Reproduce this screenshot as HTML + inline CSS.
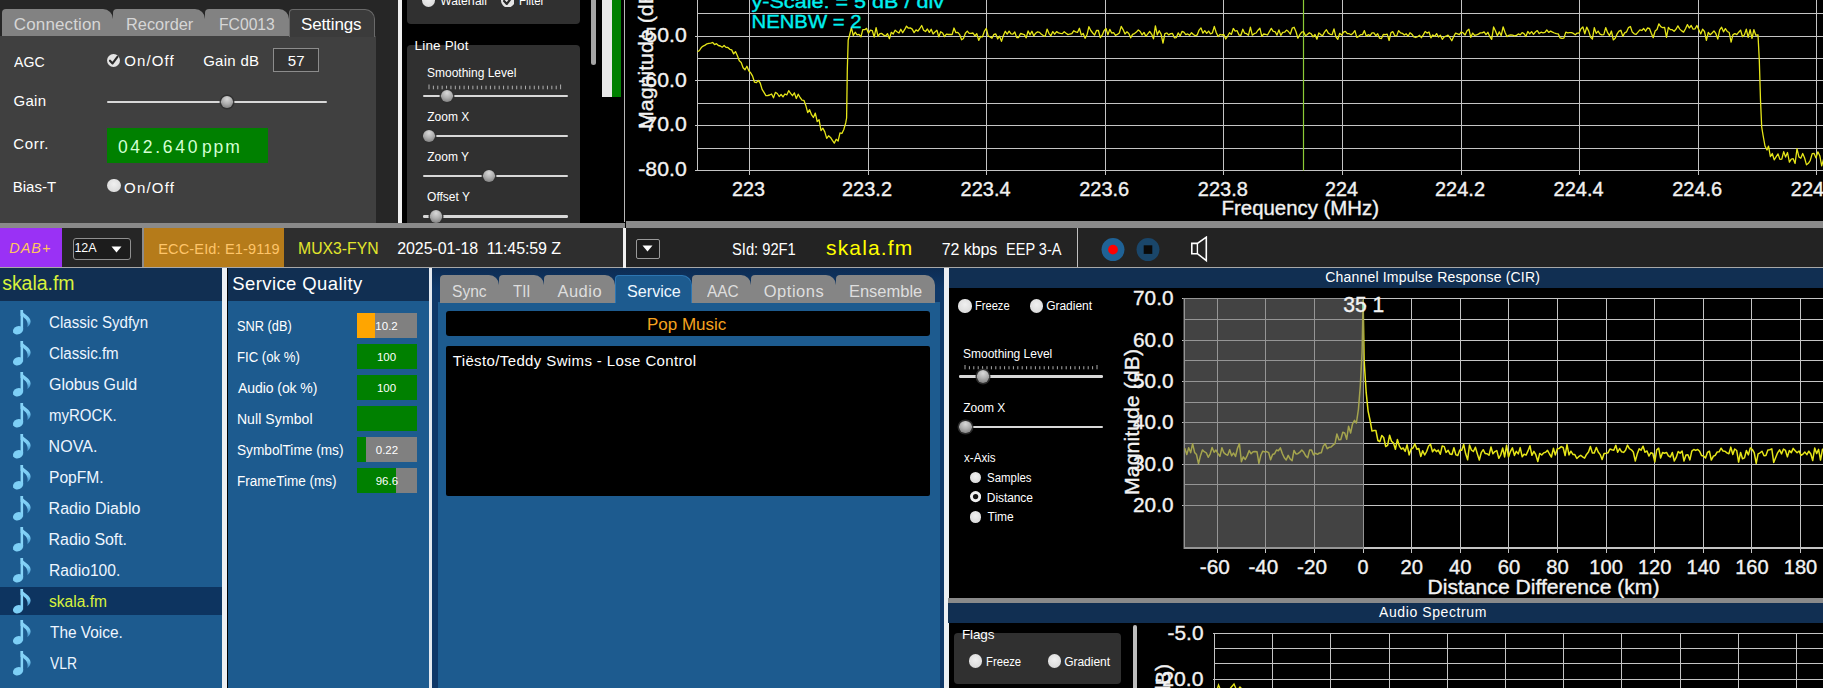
<!DOCTYPE html>
<html lang="en"><head><meta charset="utf-8"><title>DAB receiver</title>
<style>
html,body{margin:0;padding:0;background:#000;}
body{width:1823px;height:688px;overflow:hidden;position:relative;font-family:"Liberation Sans",sans-serif;}
#root{position:absolute;left:0;top:0;width:1823px;height:688px;overflow:hidden;background:#000;}
#root div,#root span,#root svg{position:absolute;display:block;}
#root span{white-space:pre;line-height:1em;}
svg text{font-family:"Liberation Sans",sans-serif;}
</style></head><body><div id="root">
<div style="left:0px;top:0px;width:398px;height:223px;background:#262626;"></div>
<div style="left:0px;top:36px;width:376px;height:187px;background:#404040;"></div>
<div style="left:2px;top:9px;width:111px;height:27px;background:#828282;border-radius:4px 10px 0 0;"></div>
<div style="left:113px;top:9px;width:92px;height:27px;background:#828282;border-radius:4px 10px 0 0;"></div>
<div style="left:205px;top:9px;width:84px;height:27px;background:#828282;border-radius:4px 10px 0 0;"></div>
<div style="left:289px;top:9px;width:86px;height:28px;background:#3b3b3b;border-radius:4px 10px 0 0;box-sizing:border-box;border:1px solid #6a6a6a;border-bottom:none;"></div>
<span style="left:13.85px;top:16.01px;font-size:17px;color:#d6d6d6;letter-spacing:0.126px;">Connection</span>
<span style="left:125.99px;top:16.01px;font-size:17px;color:#d6d6d6;transform:scaleX(0.9626);transform-origin:0 0;">Recorder</span>
<span style="left:218.84px;top:16.01px;font-size:17px;color:#d6d6d6;transform:scaleX(0.9230);transform-origin:0 0;">FC0013</span>
<span style="left:300.94px;top:16.01px;font-size:17px;color:#fff;letter-spacing:-0.114px;">Settings</span>
<span style="left:14.20px;top:53.80px;font-size:15px;color:#fff;transform:scaleX(0.9421);transform-origin:0 0;">AGC</span>
<span style="left:124.33px;top:53.30px;font-size:15px;color:#fff;letter-spacing:1.105px;">On/Off</span>
<span style="left:203.15px;top:52.80px;font-size:15px;color:#fff;letter-spacing:0.292px;">Gain dB</span>
<div style="left:273px;top:48px;width:46px;height:24px;background:#343434;box-sizing:border-box;border:1px solid #8c8c8c;"></div>
<span style="left:287.80px;top:52.80px;font-size:15px;color:#fff;letter-spacing:0.000px;">57</span>
<span style="left:13.45px;top:92.90px;font-size:15px;color:#fff;letter-spacing:0.325px;">Gain</span>
<span style="left:13.25px;top:136.00px;font-size:15px;color:#fff;letter-spacing:0.681px;">Corr.</span>
<div style="left:107px;top:128px;width:161px;height:35px;background:#008000;"></div>
<span style="left:117.90px;top:138.69px;font-size:17.5px;color:#d4ffd4;letter-spacing:2.708px;">042.640</span>
<span style="left:202.06px;top:138.69px;font-size:17.5px;color:#d4ffd4;letter-spacing:1.819px;">ppm</span>
<span style="left:12.80px;top:178.90px;font-size:15px;color:#fff;letter-spacing:-0.010px;">Bias-T</span>
<span style="left:124.03px;top:179.60px;font-size:15px;color:#fff;letter-spacing:1.205px;">On/Off</span>
<svg style="left:107.4px;top:53.5px;" width="13.0" height="13.0" viewBox="0 0 14 14"><circle cx="7" cy="7" r="7" fill="#e4e4e4"/><path d="M3.2 7.2 L6 10.2 L11.2 3.2" fill="none" stroke="#2a2a2a" stroke-width="2.3" stroke-linecap="round" stroke-linejoin="round"/></svg>
<div style="left:107.3px;top:178.8px;width:13.4px;height:13.4px;border-radius:50%;background:radial-gradient(circle at 50% 40%,#f0f0f0,#d4d4d4);"></div>
<div style="left:107px;top:101.1px;width:220px;height:2.4px;background:#d8d8d8;border-radius:1.2px;"></div>
<div style="left:221.0px;top:96.1px;width:12.4px;height:12.4px;border-radius:50%;background:radial-gradient(circle at 50% 25%,#d8d8d8 0%,#b0b0b0 45%,#707070 100%);box-shadow:0 0 0 1.5px rgba(48,48,48,.9);"></div>
<div style="left:398px;top:0px;width:4px;height:223px;background:#f0f0f0;"></div>
<div style="left:402px;top:0px;width:222px;height:223px;background:#000;"></div>
<div style="left:406.5px;top:-10px;width:173px;height:34px;background:#303030;border-radius:4px;"></div>
<div style="left:421.9px;top:-6.3px;width:13.4px;height:13.4px;border-radius:50%;background:radial-gradient(circle at 50% 40%,#f0f0f0,#d4d4d4);"></div>
<span style="left:440.34px;top:-4.86px;font-size:12px;color:#fff;letter-spacing:-0.040px;">Waterfall</span>
<svg style="left:500.9px;top:-6.4px;" width="13.6" height="13.6" viewBox="0 0 14 14"><circle cx="7" cy="7" r="7" fill="#e4e4e4"/><path d="M3.2 7.2 L6 10.2 L11.2 3.2" fill="none" stroke="#2a2a2a" stroke-width="2.3" stroke-linecap="round" stroke-linejoin="round"/></svg>
<span style="left:518.69px;top:-4.86px;font-size:12px;color:#fff;transform:scaleX(0.9529);transform-origin:0 0;">Filter</span>
<div style="left:406.5px;top:44.5px;width:173px;height:200px;background:#303030;border-radius:4px;"></div>
<span style="left:414.62px;top:38.87px;font-size:13.5px;color:#fff;letter-spacing:0.154px;">Line Plot</span>
<span style="left:427.06px;top:66.64px;font-size:12px;color:#fff;letter-spacing:-0.009px;">Smoothing Level</span>
<svg style="left:0;top:0" width="1823" height="688"><line x1="429.00" y1="84.5" x2="429.00" y2="89.3" stroke="#bdbdbd" stroke-width="0.9"/><line x1="433.39" y1="85.7" x2="433.39" y2="89.3" stroke="#bdbdbd" stroke-width="0.9"/><line x1="437.77" y1="85.7" x2="437.77" y2="89.3" stroke="#bdbdbd" stroke-width="0.9"/><line x1="442.16" y1="85.7" x2="442.16" y2="89.3" stroke="#bdbdbd" stroke-width="0.9"/><line x1="446.55" y1="85.7" x2="446.55" y2="89.3" stroke="#bdbdbd" stroke-width="0.9"/><line x1="450.93" y1="85.7" x2="450.93" y2="89.3" stroke="#bdbdbd" stroke-width="0.9"/><line x1="455.32" y1="85.7" x2="455.32" y2="89.3" stroke="#bdbdbd" stroke-width="0.9"/><line x1="459.71" y1="85.7" x2="459.71" y2="89.3" stroke="#bdbdbd" stroke-width="0.9"/><line x1="464.09" y1="85.7" x2="464.09" y2="89.3" stroke="#bdbdbd" stroke-width="0.9"/><line x1="468.48" y1="85.7" x2="468.48" y2="89.3" stroke="#bdbdbd" stroke-width="0.9"/><line x1="472.87" y1="85.7" x2="472.87" y2="89.3" stroke="#bdbdbd" stroke-width="0.9"/><line x1="477.25" y1="85.7" x2="477.25" y2="89.3" stroke="#bdbdbd" stroke-width="0.9"/><line x1="481.64" y1="85.7" x2="481.64" y2="89.3" stroke="#bdbdbd" stroke-width="0.9"/><line x1="486.03" y1="85.7" x2="486.03" y2="89.3" stroke="#bdbdbd" stroke-width="0.9"/><line x1="490.41" y1="85.7" x2="490.41" y2="89.3" stroke="#bdbdbd" stroke-width="0.9"/><line x1="494.80" y1="85.7" x2="494.80" y2="89.3" stroke="#bdbdbd" stroke-width="0.9"/><line x1="499.19" y1="85.7" x2="499.19" y2="89.3" stroke="#bdbdbd" stroke-width="0.9"/><line x1="503.57" y1="85.7" x2="503.57" y2="89.3" stroke="#bdbdbd" stroke-width="0.9"/><line x1="507.96" y1="85.7" x2="507.96" y2="89.3" stroke="#bdbdbd" stroke-width="0.9"/><line x1="512.35" y1="85.7" x2="512.35" y2="89.3" stroke="#bdbdbd" stroke-width="0.9"/><line x1="516.73" y1="85.7" x2="516.73" y2="89.3" stroke="#bdbdbd" stroke-width="0.9"/><line x1="521.12" y1="85.7" x2="521.12" y2="89.3" stroke="#bdbdbd" stroke-width="0.9"/><line x1="525.51" y1="85.7" x2="525.51" y2="89.3" stroke="#bdbdbd" stroke-width="0.9"/><line x1="529.89" y1="85.7" x2="529.89" y2="89.3" stroke="#bdbdbd" stroke-width="0.9"/><line x1="534.28" y1="85.7" x2="534.28" y2="89.3" stroke="#bdbdbd" stroke-width="0.9"/><line x1="538.67" y1="85.7" x2="538.67" y2="89.3" stroke="#bdbdbd" stroke-width="0.9"/><line x1="543.05" y1="85.7" x2="543.05" y2="89.3" stroke="#bdbdbd" stroke-width="0.9"/><line x1="547.44" y1="85.7" x2="547.44" y2="89.3" stroke="#bdbdbd" stroke-width="0.9"/><line x1="551.83" y1="85.7" x2="551.83" y2="89.3" stroke="#bdbdbd" stroke-width="0.9"/><line x1="556.21" y1="85.7" x2="556.21" y2="89.3" stroke="#bdbdbd" stroke-width="0.9"/><line x1="560.60" y1="84.5" x2="560.60" y2="89.3" stroke="#bdbdbd" stroke-width="0.9"/></svg>
<div style="left:422.5px;top:94.89999999999999px;width:145.5px;height:2.4px;background:#d8d8d8;border-radius:1.2px;"></div>
<div style="left:440.6px;top:89.9px;width:12.4px;height:12.4px;border-radius:50%;background:radial-gradient(circle at 50% 25%,#d8d8d8 0%,#b0b0b0 45%,#707070 100%);box-shadow:0 0 0 1.5px rgba(48,48,48,.9);"></div>
<span style="left:427.24px;top:111.04px;font-size:12px;color:#fff;">Zoom X</span>
<div style="left:422.5px;top:134.9px;width:145.0px;height:2.4px;background:#d8d8d8;border-radius:1.2px;"></div>
<div style="left:423.1px;top:129.9px;width:12.4px;height:12.4px;border-radius:50%;background:radial-gradient(circle at 50% 25%,#d8d8d8 0%,#b0b0b0 45%,#707070 100%);box-shadow:0 0 0 1.5px rgba(48,48,48,.9);"></div>
<span style="left:427.24px;top:151.44px;font-size:12px;color:#fff;">Zoom Y</span>
<div style="left:422.5px;top:174.8px;width:145.5px;height:2.4px;background:#d8d8d8;border-radius:1.2px;"></div>
<div style="left:482.8px;top:169.8px;width:12.4px;height:12.4px;border-radius:50%;background:radial-gradient(circle at 50% 25%,#d8d8d8 0%,#b0b0b0 45%,#707070 100%);box-shadow:0 0 0 1.5px rgba(48,48,48,.9);"></div>
<span style="left:427.06px;top:191.34px;font-size:12px;color:#fff;">Offset Y</span>
<div style="left:422.5px;top:215.20000000000002px;width:145.5px;height:2.4px;background:#d8d8d8;border-radius:1.2px;"></div>
<div style="left:429.8px;top:210.2px;width:12.4px;height:12.4px;border-radius:50%;background:radial-gradient(circle at 50% 25%,#d8d8d8 0%,#b0b0b0 45%,#707070 100%);box-shadow:0 0 0 1.5px rgba(48,48,48,.9);"></div>
<div style="left:591px;top:-5px;width:5px;height:70px;background:#a4a4a4;border-radius:2.5px;"></div>
<div style="left:601.5px;top:0px;width:10.2px;height:96.6px;background:#e8e8e8;"></div>
<div style="left:611.7px;top:0px;width:9.8px;height:96.6px;background:#008000;"></div>
<div style="left:624px;top:0px;width:1.4px;height:222px;background:#b8b8b8;"></div>
<svg style="left:0;top:0" width="1823" height="688" viewBox="0 0 1823 688"><rect x="625.5" y="0" width="1198" height="221" fill="#000"/><path d="M697 170.5H1823M697 148.1H1823M697 125.7H1823M697 103.3H1823M697 80.9H1823M697 58.5H1823M697 36.1H1823M697 13.7H1823M749.4 0V175.0M868.0 0V175.0M986.6 0V175.0M1105.2 0V175.0M1223.8 0V175.0M1342.4 0V175.0M1461.0 0V175.0M1579.6 0V175.0M1698.2 0V175.0M1816.8 0V175.0M697 0V170.5" stroke="#c4c4c4" stroke-width="1" fill="none" shape-rendering="crispEdges"/><path d="M695 170.5H697M695 125.7H697M695 80.9H697M695 36.1H697" stroke="#c4c4c4" stroke-width="1" fill="none" shape-rendering="crispEdges"/><path d="M1303.5 0V170.5" stroke="#8ccb35" stroke-width="1.2" fill="none"/><path d="M697.5 51.8 L699.4 50.5 L701.3 47.6 L703.2 46.1 L705.1 45.1 L707.0 43.8 L708.9 43.4 L710.8 43.2 L712.7 42.5 L714.6 44.6 L716.5 43.7 L718.4 45.5 L720.3 46.0 L722.2 47.2 L724.1 45.5 L726.0 47.4 L727.9 47.5 L729.8 49.3 L731.7 49.9 L733.6 53.9 L735.5 51.6 L737.4 55.8 L739.3 60.8 L741.2 62.5 L743.1 67.8 L745.0 69.7 L746.9 66.2 L748.8 70.8 L750.7 72.9 L752.6 76.1 L754.5 82.2 L756.4 82.7 L758.3 80.5 L760.2 83.0 L762.1 89.4 L764.0 92.4 L765.9 95.6 L767.8 95.5 L769.7 95.0 L771.6 94.0 L773.5 97.8 L775.4 92.4 L777.3 93.5 L779.2 96.5 L781.1 94.5 L783.0 96.9 L784.9 94.0 L786.8 94.9 L788.7 90.7 L790.6 93.3 L792.5 95.7 L794.4 92.9 L796.3 98.5 L798.2 94.2 L800.1 97.5 L802.0 100.1 L803.9 100.3 L805.8 105.4 L807.7 112.6 L809.6 109.7 L811.5 114.7 L813.4 117.5 L815.3 113.1 L817.2 121.5 L819.1 119.8 L821.0 130.5 L822.9 128.2 L824.8 131.9 L826.7 138.4 L828.6 135.8 L830.5 137.4 L832.4 140.4 L834.3 143.1 L836.2 139.3 L838.1 141.0 L840.0 132.9 L841.9 133.5 L843.8 129.5 L845.7 122.9 L846.6 118.0 L847.3 70.0 L848.2 40.0 L849.5 35.5 L851.4 27.7 L853.3 35.5 L855.2 32.2 L857.1 34.8 L859.0 34.4 L860.9 36.9 L862.8 29.6 L864.7 29.7 L866.6 28.4 L868.5 33.2 L870.4 30.2 L872.3 30.7 L874.2 37.0 L876.1 27.7 L878.0 36.4 L879.9 33.6 L881.8 33.5 L883.7 35.2 L885.6 36.0 L887.5 33.6 L889.4 38.7 L891.3 32.3 L893.2 34.0 L895.1 30.2 L897.0 31.7 L898.9 33.1 L900.8 29.3 L902.7 32.7 L904.6 29.7 L906.5 26.1 L908.4 28.2 L910.3 27.9 L912.2 29.1 L914.1 32.6 L916.0 29.9 L917.9 31.1 L919.8 28.5 L921.7 25.5 L923.6 30.2 L925.5 31.5 L927.4 29.0 L929.3 32.4 L931.2 29.3 L933.1 34.0 L935.0 31.9 L936.9 30.3 L938.8 36.9 L940.7 31.7 L942.6 33.0 L944.5 36.6 L946.4 34.2 L948.3 34.5 L950.2 34.4 L952.1 34.6 L954.0 28.0 L955.9 32.7 L957.8 32.3 L959.7 34.7 L961.6 39.8 L963.5 38.4 L965.4 33.2 L967.3 31.1 L969.2 33.3 L971.1 33.4 L973.0 33.0 L974.9 35.8 L976.8 33.8 L978.7 40.4 L980.6 36.5 L982.5 36.8 L984.4 31.1 L986.3 28.4 L988.2 36.2 L990.1 36.9 L992.0 38.2 L993.9 34.3 L995.8 34.0 L997.7 39.0 L999.6 36.2 L1001.5 41.4 L1003.4 35.4 L1005.3 31.3 L1007.2 34.1 L1009.1 31.2 L1011.0 33.9 L1012.9 34.2 L1014.8 32.0 L1016.7 37.6 L1018.6 37.5 L1020.5 33.5 L1022.4 34.0 L1024.3 34.6 L1026.2 37.8 L1028.1 31.0 L1030.0 34.8 L1031.9 31.3 L1033.8 35.9 L1035.7 33.2 L1037.6 31.8 L1039.5 32.4 L1041.4 34.2 L1043.3 35.5 L1045.2 36.4 L1047.1 29.1 L1049.0 33.6 L1050.9 35.7 L1052.8 31.6 L1054.7 34.2 L1056.6 31.6 L1058.5 32.9 L1060.4 33.4 L1062.3 33.6 L1064.2 31.8 L1066.1 33.3 L1068.0 34.6 L1069.9 34.0 L1071.8 33.6 L1073.7 30.8 L1075.6 31.9 L1077.5 32.4 L1079.4 28.3 L1081.3 35.0 L1083.2 33.4 L1085.1 38.3 L1087.0 34.8 L1088.9 26.7 L1090.8 30.5 L1092.7 33.0 L1094.6 35.1 L1096.5 30.4 L1098.4 30.5 L1100.3 37.6 L1102.2 35.2 L1104.1 30.6 L1106.0 28.5 L1107.9 34.8 L1109.8 29.4 L1111.7 33.0 L1113.6 32.7 L1115.5 35.3 L1117.4 34.4 L1119.3 33.0 L1121.2 26.4 L1123.1 29.6 L1125.0 34.0 L1126.9 31.8 L1128.8 33.4 L1130.7 37.8 L1132.6 34.4 L1134.5 33.6 L1136.4 32.1 L1138.3 29.9 L1140.2 31.5 L1142.1 34.9 L1144.0 32.4 L1145.9 36.4 L1147.8 33.8 L1149.7 31.5 L1151.6 34.1 L1153.5 38.8 L1155.4 25.8 L1157.3 34.8 L1159.2 30.7 L1161.1 34.1 L1163.0 43.1 L1164.9 33.6 L1166.8 33.0 L1168.7 34.9 L1170.6 33.6 L1172.5 33.4 L1174.4 37.8 L1176.3 37.6 L1178.2 32.9 L1180.1 35.9 L1182.0 31.4 L1183.9 32.2 L1185.8 34.6 L1187.7 33.9 L1189.6 35.3 L1191.5 32.7 L1193.4 34.4 L1195.3 35.8 L1197.2 34.9 L1199.1 30.1 L1201.0 27.9 L1202.9 33.2 L1204.8 30.7 L1206.7 33.3 L1208.6 31.1 L1210.5 33.9 L1212.4 33.0 L1214.3 26.4 L1216.2 32.5 L1218.1 36.6 L1220.0 34.4 L1221.9 35.0 L1223.8 34.5 L1225.7 39.0 L1227.6 36.3 L1229.5 32.8 L1231.4 34.4 L1233.3 28.5 L1235.2 31.1 L1237.1 30.7 L1239.0 35.0 L1240.9 35.3 L1242.8 29.2 L1244.7 33.2 L1246.6 33.7 L1248.5 35.2 L1250.4 27.1 L1252.3 35.2 L1254.2 33.7 L1256.1 33.0 L1258.0 30.2 L1259.9 28.2 L1261.8 36.4 L1263.7 34.0 L1265.6 34.3 L1267.5 35.0 L1269.4 31.6 L1271.3 28.4 L1273.2 31.3 L1275.1 31.7 L1277.0 35.1 L1278.9 29.9 L1280.8 35.4 L1282.7 32.4 L1284.6 32.2 L1286.5 30.1 L1288.4 31.5 L1290.3 34.2 L1292.2 28.2 L1294.1 27.3 L1296.0 31.7 L1297.9 38.2 L1299.8 34.7 L1301.7 32.2 L1303.6 31.7 L1305.5 35.8 L1307.4 34.4 L1309.3 32.7 L1311.2 33.8 L1313.1 36.8 L1315.0 34.4 L1316.9 39.2 L1318.8 32.9 L1320.7 34.6 L1322.6 35.8 L1324.5 32.1 L1326.4 29.7 L1328.3 33.1 L1330.2 34.3 L1332.1 34.7 L1334.0 28.9 L1335.9 36.8 L1337.8 39.4 L1339.7 33.3 L1341.6 35.1 L1343.5 32.2 L1345.4 31.3 L1347.3 33.6 L1349.2 33.7 L1351.1 34.8 L1353.0 33.2 L1354.9 30.6 L1356.8 37.4 L1358.7 36.4 L1360.6 34.6 L1362.5 34.6 L1364.4 30.6 L1366.3 36.3 L1368.2 34.7 L1370.1 35.6 L1372.0 32.9 L1373.9 32.8 L1375.8 35.7 L1377.7 33.7 L1379.6 38.2 L1381.5 38.5 L1383.4 34.3 L1385.3 34.7 L1387.2 34.1 L1389.1 40.5 L1391.0 32.7 L1392.9 31.7 L1394.8 35.8 L1396.7 35.9 L1398.6 30.6 L1400.5 32.9 L1402.4 33.3 L1404.3 35.0 L1406.2 33.8 L1408.1 36.2 L1410.0 32.7 L1411.9 34.2 L1413.8 36.8 L1415.7 37.5 L1417.6 36.7 L1419.5 35.3 L1421.4 37.7 L1423.3 34.9 L1425.2 31.5 L1427.1 33.1 L1429.0 32.0 L1430.9 37.9 L1432.8 34.9 L1434.7 36.3 L1436.6 33.6 L1438.5 37.0 L1440.4 35.2 L1442.3 39.3 L1444.2 36.9 L1446.1 36.2 L1448.0 35.1 L1449.9 37.5 L1451.8 40.8 L1453.7 36.5 L1455.6 33.1 L1457.5 33.8 L1459.4 34.6 L1461.3 32.0 L1463.2 33.0 L1465.1 35.0 L1467.0 30.8 L1468.9 29.2 L1470.8 37.3 L1472.7 33.1 L1474.6 35.4 L1476.5 34.8 L1478.4 34.1 L1480.3 32.9 L1482.2 32.8 L1484.1 31.8 L1486.0 34.7 L1487.9 32.3 L1489.8 36.7 L1491.7 39.3 L1493.6 26.9 L1495.5 31.0 L1497.4 35.8 L1499.3 31.9 L1501.2 35.7 L1503.1 26.8 L1505.0 32.3 L1506.9 36.6 L1508.8 35.4 L1510.7 34.8 L1512.6 35.2 L1514.5 35.8 L1516.4 35.4 L1518.3 33.9 L1520.2 34.8 L1522.1 32.6 L1524.0 33.6 L1525.9 36.5 L1527.8 31.5 L1529.7 33.9 L1531.6 31.7 L1533.5 34.3 L1535.4 32.0 L1537.3 30.6 L1539.2 33.6 L1541.1 32.2 L1543.0 32.8 L1544.9 32.4 L1546.8 30.0 L1548.7 32.4 L1550.6 31.1 L1552.5 32.1 L1554.4 33.0 L1556.3 33.7 L1558.2 33.9 L1560.1 37.9 L1562.0 38.3 L1563.9 38.1 L1565.8 32.1 L1567.7 32.8 L1569.6 32.7 L1571.5 32.6 L1573.4 33.4 L1575.3 34.8 L1577.2 33.1 L1579.1 33.0 L1581.0 28.8 L1582.9 27.0 L1584.8 33.8 L1586.7 27.1 L1588.6 30.9 L1590.5 37.0 L1592.4 39.1 L1594.3 27.7 L1596.2 33.4 L1598.1 31.1 L1600.0 34.1 L1601.9 34.9 L1603.8 34.7 L1605.7 27.6 L1607.6 32.7 L1609.5 35.7 L1611.4 31.0 L1613.3 39.9 L1615.2 38.3 L1617.1 33.9 L1619.0 31.2 L1620.9 30.3 L1622.8 36.4 L1624.7 32.8 L1626.6 31.8 L1628.5 27.6 L1630.4 26.5 L1632.3 32.1 L1634.2 33.8 L1636.1 34.3 L1638.0 32.1 L1639.9 29.8 L1641.8 30.5 L1643.7 28.5 L1645.6 31.2 L1647.5 28.0 L1649.4 28.3 L1651.3 33.2 L1653.2 37.7 L1655.1 31.1 L1657.0 29.5 L1658.9 23.8 L1660.8 26.6 L1662.7 27.7 L1664.6 27.4 L1666.5 37.4 L1668.4 27.3 L1670.3 29.6 L1672.2 29.7 L1674.1 31.3 L1676.0 29.3 L1677.9 25.9 L1679.8 29.1 L1681.7 30.9 L1683.6 32.1 L1685.5 28.7 L1687.4 24.6 L1689.3 28.0 L1691.2 25.5 L1693.1 29.2 L1695.0 28.9 L1696.9 25.5 L1698.8 29.7 L1700.7 33.9 L1702.6 29.2 L1704.5 31.5 L1706.4 40.4 L1708.3 32.5 L1710.2 34.8 L1712.1 33.0 L1714.0 30.9 L1715.9 33.7 L1717.8 39.1 L1719.7 29.8 L1721.6 27.2 L1723.5 31.8 L1725.4 28.6 L1727.3 31.5 L1729.2 32.5 L1731.1 42.2 L1733.0 34.7 L1734.9 33.7 L1736.8 34.6 L1738.7 32.2 L1740.6 30.1 L1742.5 36.7 L1744.4 34.9 L1746.3 29.1 L1748.2 37.4 L1750.1 29.7 L1752.0 38.4 L1753.9 29.6 L1755.8 35.2 L1758.0 35.0 L1759.3 60.0 L1760.5 100.0 L1761.7 127.0 L1763.0 135.0 L1765.0 146.0 L1767.0 150.0 L1768.5 146.1 L1770.4 156.6 L1772.3 153.5 L1774.2 159.9 L1776.1 156.9 L1778.0 153.9 L1779.9 159.4 L1781.8 159.1 L1783.7 151.6 L1785.6 157.1 L1787.5 152.5 L1789.4 162.2 L1791.3 159.1 L1793.2 158.7 L1795.1 163.5 L1797.0 148.6 L1798.9 156.9 L1800.8 158.2 L1802.7 153.5 L1804.6 158.0 L1806.5 164.8 L1808.4 163.3 L1810.3 160.3 L1812.2 153.6 L1814.1 153.5 L1816.0 157.9 L1817.9 151.8 L1819.8 155.7 L1821.7 165.9 L1823.6 158.9 L1825.5 154.4" stroke="#e6e619" stroke-width="1.3" fill="none" stroke-linejoin="round"/><text x="686.7" y="176.2" font-size="20.5" fill="#f2f2f2" stroke="#f2f2f2" stroke-width="0.35" text-anchor="end" textLength="48.4" lengthAdjust="spacingAndGlyphs">-80.0</text><text x="686.7" y="131.4" font-size="20.5" fill="#f2f2f2" stroke="#f2f2f2" stroke-width="0.35" text-anchor="end" textLength="48.4" lengthAdjust="spacingAndGlyphs">-70.0</text><text x="686.7" y="86.6" font-size="20.5" fill="#f2f2f2" stroke="#f2f2f2" stroke-width="0.35" text-anchor="end" textLength="48.4" lengthAdjust="spacingAndGlyphs">-60.0</text><text x="686.7" y="41.8" font-size="20.5" fill="#f2f2f2" stroke="#f2f2f2" stroke-width="0.35" text-anchor="end" textLength="48.4" lengthAdjust="spacingAndGlyphs">-50.0</text><text x="748.4" y="195.8" font-size="20.5" fill="#f2f2f2" stroke="#f2f2f2" stroke-width="0.35" text-anchor="middle" textLength="33.0" lengthAdjust="spacingAndGlyphs">223</text><text x="867.0" y="195.8" font-size="20.5" fill="#f2f2f2" stroke="#f2f2f2" stroke-width="0.35" text-anchor="middle" textLength="50.0" lengthAdjust="spacingAndGlyphs">223.2</text><text x="985.6" y="195.8" font-size="20.5" fill="#f2f2f2" stroke="#f2f2f2" stroke-width="0.35" text-anchor="middle" textLength="50.0" lengthAdjust="spacingAndGlyphs">223.4</text><text x="1104.2" y="195.8" font-size="20.5" fill="#f2f2f2" stroke="#f2f2f2" stroke-width="0.35" text-anchor="middle" textLength="50.0" lengthAdjust="spacingAndGlyphs">223.6</text><text x="1222.8" y="195.8" font-size="20.5" fill="#f2f2f2" stroke="#f2f2f2" stroke-width="0.35" text-anchor="middle" textLength="50.0" lengthAdjust="spacingAndGlyphs">223.8</text><text x="1341.4" y="195.8" font-size="20.5" fill="#f2f2f2" stroke="#f2f2f2" stroke-width="0.35" text-anchor="middle" textLength="33.0" lengthAdjust="spacingAndGlyphs">224</text><text x="1460.0" y="195.8" font-size="20.5" fill="#f2f2f2" stroke="#f2f2f2" stroke-width="0.35" text-anchor="middle" textLength="50.0" lengthAdjust="spacingAndGlyphs">224.2</text><text x="1578.6" y="195.8" font-size="20.5" fill="#f2f2f2" stroke="#f2f2f2" stroke-width="0.35" text-anchor="middle" textLength="50.0" lengthAdjust="spacingAndGlyphs">224.4</text><text x="1697.2" y="195.8" font-size="20.5" fill="#f2f2f2" stroke="#f2f2f2" stroke-width="0.35" text-anchor="middle" textLength="50.0" lengthAdjust="spacingAndGlyphs">224.6</text><text x="1815.8" y="195.8" font-size="20.5" fill="#f2f2f2" stroke="#f2f2f2" stroke-width="0.35" text-anchor="middle" textLength="50.0" lengthAdjust="spacingAndGlyphs">224.8</text><text x="1300.3" y="215.0" font-size="20.5" fill="#f2f2f2" stroke="#f2f2f2" stroke-width="0.35" text-anchor="middle" textLength="157.5" lengthAdjust="spacingAndGlyphs">Frequency (MHz)</text><text x="0.0" y="0.0" font-size="21" fill="#f2f2f2" stroke="#f2f2f2" stroke-width="0.35" text-anchor="middle" textLength="146.0" lengthAdjust="spacingAndGlyphs" transform="translate(653,56) rotate(-90)">Magnitude (dB)</text><text x="751.5" y="8.3" font-size="19" fill="#00f0f0" stroke="#00f0f0" stroke-width="0.35" text-anchor="start" textLength="192.5" lengthAdjust="spacingAndGlyphs">y-Scale: = 5 dB / div</text><text x="751.5" y="28.1" font-size="19" fill="#00f0f0" stroke="#00f0f0" stroke-width="0.35" text-anchor="start" textLength="110.0" lengthAdjust="spacingAndGlyphs">NENBW = 2</text></svg>
<div style="left:0px;top:223px;width:625px;height:5px;background:#8a8a8a;"></div>
<div style="left:625.5px;top:220.5px;width:1198px;height:7.5px;background:#8a8a8a;"></div>
<div style="left:0px;top:228px;width:1823px;height:38.5px;background:#262626;"></div>
<div style="left:0px;top:266.5px;width:1823px;height:1.7px;background:#a8a8a8;"></div>
<div style="left:0px;top:228px;width:62.3px;height:38.5px;background:#9a31f5;"></div>
<span style="left:9.26px;top:240.73px;font-size:14.5px;color:#ffc65e;letter-spacing:0.987px;font-style:italic;">DAB+</span>
<div style="left:142px;top:228px;width:2px;height:38.5px;background:#8c8c8c;"></div>
<div style="left:144px;top:228px;width:139.5px;height:38.5px;background:#b57b1a;"></div>
<div style="left:283.5px;top:228px;width:339px;height:38.5px;background:#2e2e2e;"></div>
<div style="left:72.8px;top:238px;width:58.5px;height:21.7px;background:#1c1c1c;box-sizing:border-box;border:1px solid #909090;border-radius:3px;"></div>
<span style="left:74.56px;top:242.42px;font-size:12.5px;color:#fff;letter-spacing:-0.125px;">12A</span>
<svg style="left:111px;top:245.5px" width="11" height="7" viewBox="0 0 11 7"><path d="M0.5 0.6H10.5L5.5 6.4Z" fill="#fff"/></svg>
<span style="left:158.24px;top:241.63px;font-size:14.5px;color:#ffc569;letter-spacing:0.163px;">ECC-EId: E1-9119</span>
<span style="left:298.44px;top:240.86px;font-size:16px;color:#e2e62c;transform:scaleX(0.9848);transform-origin:0 0;">MUX3-FYN</span>
<span style="left:397.30px;top:240.86px;font-size:16px;color:#fff;letter-spacing:-0.115px;">2025-01-18  11:45:59 Z</span>
<div style="left:625.7px;top:228px;width:1198px;height:38.5px;background:#232323;"></div>
<div style="left:622.7px;top:227.5px;width:3px;height:40px;background:#f0f0f0;"></div>
<div style="left:635.5px;top:238.6px;width:24.7px;height:20.8px;background:#1c1c1c;box-sizing:border-box;border:1px solid #9a9a9a;border-radius:2px;"></div>
<svg style="left:642.3px;top:245.3px" width="11" height="7" viewBox="0 0 11 7"><path d="M0.5 0.6H10.5L5.5 6.4Z" fill="#fff"/></svg>
<span style="left:732.04px;top:241.86px;font-size:16px;color:#fff;transform:scaleX(0.9187);transform-origin:0 0;">SId: 92F1</span>
<span style="left:826.07px;top:236.62px;font-size:21px;color:#ffff00;letter-spacing:1.153px;">skala.fm</span>
<span style="left:941.70px;top:241.86px;font-size:16px;color:#fff;letter-spacing:-0.070px;">72 kbps</span>
<span style="left:1006.44px;top:241.86px;font-size:16px;color:#fff;transform:scaleX(0.9086);transform-origin:0 0;">EEP 3-A</span>
<div style="left:1076.6px;top:228px;width:1.2px;height:39px;background:#c0c0c0;"></div>
<svg style="left:1100px;top:236px" width="120" height="28" viewBox="0 0 120 28"><circle cx="13" cy="13.6" r="11.5" fill="#1f6296"/><circle cx="13" cy="13.6" r="4.9" fill="#ff0000"/><circle cx="48" cy="13.6" r="11.5" fill="#1a466a"/><rect x="43.7" y="9.3" width="8.6" height="8.6" fill="#0a0a0a"/><path d="M91.8 7.4H97.4L106.3 1.2V24.6L97.4 17.7H91.8Z" fill="none" stroke="#fff" stroke-width="1.6" stroke-linejoin="miter"/><path d="M97.4 7.4V17.7" stroke="#fff" stroke-width="1.4"/></svg>
<div style="left:0px;top:268px;width:222px;height:420px;background:#1d5b8f;"></div>
<div style="left:0px;top:268px;width:222.3px;height:32.6px;background:#112f52;"></div>
<span style="left:2.21px;top:274.49px;font-size:19.5px;color:#d9f23c;letter-spacing:-0.041px;">skala.fm</span>
<svg style="left:10px;top:309px" width="22" height="27" viewBox="0 0 22 27"><defs><linearGradient id="ng" x1="0" y1="0" x2="0" y2="1"><stop offset="0" stop-color="#8fd8fa"/><stop offset="0.55" stop-color="#7accf4"/><stop offset="1" stop-color="#3f8dc6"/></linearGradient></defs><path d="M11 0.9 C13.6 5.4 20.7 7.2 20.6 12.6 C20.5 15 19.2 17 17.3 18.2 C18.3 14.6 17.4 10.8 13.1 7.9 V7 H10.6 V1 Z" fill="url(#ng)"/><rect x="10.6" y="1" width="2.5" height="20.5" fill="#86d4f8"/><ellipse cx="8" cy="21.2" rx="5.2" ry="4" transform="rotate(-22 8 21.2)" fill="#7dcff6"/></svg>
<span style="left:49.14px;top:315.46px;font-size:16px;color:#eef6ff;transform:scaleX(0.9443);transform-origin:0 0;">Classic Sydfyn</span>
<svg style="left:10px;top:340px" width="22" height="27" viewBox="0 0 22 27"><path d="M11 0.9 C13.6 5.4 20.7 7.2 20.6 12.6 C20.5 15 19.2 17 17.3 18.2 C18.3 14.6 17.4 10.8 13.1 7.9 V7 H10.6 V1 Z" fill="url(#ng)"/><rect x="10.6" y="1" width="2.5" height="20.5" fill="#86d4f8"/><ellipse cx="8" cy="21.2" rx="5.2" ry="4" transform="rotate(-22 8 21.2)" fill="#7dcff6"/></svg>
<span style="left:49.14px;top:346.46px;font-size:16px;color:#eef6ff;transform:scaleX(0.9444);transform-origin:0 0;">Classic.fm</span>
<svg style="left:10px;top:371px" width="22" height="27" viewBox="0 0 22 27"><path d="M11 0.9 C13.6 5.4 20.7 7.2 20.6 12.6 C20.5 15 19.2 17 17.3 18.2 C18.3 14.6 17.4 10.8 13.1 7.9 V7 H10.6 V1 Z" fill="url(#ng)"/><rect x="10.6" y="1" width="2.5" height="20.5" fill="#86d4f8"/><ellipse cx="8" cy="21.2" rx="5.2" ry="4" transform="rotate(-22 8 21.2)" fill="#7dcff6"/></svg>
<span style="left:49.10px;top:377.46px;font-size:16px;color:#eef6ff;letter-spacing:-0.092px;">Globus Guld</span>
<svg style="left:10px;top:402px" width="22" height="27" viewBox="0 0 22 27"><path d="M11 0.9 C13.6 5.4 20.7 7.2 20.6 12.6 C20.5 15 19.2 17 17.3 18.2 C18.3 14.6 17.4 10.8 13.1 7.9 V7 H10.6 V1 Z" fill="url(#ng)"/><rect x="10.6" y="1" width="2.5" height="20.5" fill="#86d4f8"/><ellipse cx="8" cy="21.2" rx="5.2" ry="4" transform="rotate(-22 8 21.2)" fill="#7dcff6"/></svg>
<span style="left:48.92px;top:408.46px;font-size:16px;color:#eef6ff;transform:scaleX(0.9389);transform-origin:0 0;">myROCK.</span>
<svg style="left:10px;top:433px" width="22" height="27" viewBox="0 0 22 27"><path d="M11 0.9 C13.6 5.4 20.7 7.2 20.6 12.6 C20.5 15 19.2 17 17.3 18.2 C18.3 14.6 17.4 10.8 13.1 7.9 V7 H10.6 V1 Z" fill="url(#ng)"/><rect x="10.6" y="1" width="2.5" height="20.5" fill="#86d4f8"/><ellipse cx="8" cy="21.2" rx="5.2" ry="4" transform="rotate(-22 8 21.2)" fill="#7dcff6"/></svg>
<span style="left:48.62px;top:439.46px;font-size:16px;color:#eef6ff;letter-spacing:0.065px;">NOVA.</span>
<svg style="left:10px;top:464px" width="22" height="27" viewBox="0 0 22 27"><path d="M11 0.9 C13.6 5.4 20.7 7.2 20.6 12.6 C20.5 15 19.2 17 17.3 18.2 C18.3 14.6 17.4 10.8 13.1 7.9 V7 H10.6 V1 Z" fill="url(#ng)"/><rect x="10.6" y="1" width="2.5" height="20.5" fill="#86d4f8"/><ellipse cx="8" cy="21.2" rx="5.2" ry="4" transform="rotate(-22 8 21.2)" fill="#7dcff6"/></svg>
<span style="left:48.65px;top:470.46px;font-size:16px;color:#eef6ff;transform:scaleX(0.9760);transform-origin:0 0;">PopFM.</span>
<svg style="left:10px;top:495px" width="22" height="27" viewBox="0 0 22 27"><path d="M11 0.9 C13.6 5.4 20.7 7.2 20.6 12.6 C20.5 15 19.2 17 17.3 18.2 C18.3 14.6 17.4 10.8 13.1 7.9 V7 H10.6 V1 Z" fill="url(#ng)"/><rect x="10.6" y="1" width="2.5" height="20.5" fill="#86d4f8"/><ellipse cx="8" cy="21.2" rx="5.2" ry="4" transform="rotate(-22 8 21.2)" fill="#7dcff6"/></svg>
<span style="left:48.62px;top:501.46px;font-size:16px;color:#eef6ff;letter-spacing:0.011px;">Radio Diablo</span>
<svg style="left:10px;top:526px" width="22" height="27" viewBox="0 0 22 27"><path d="M11 0.9 C13.6 5.4 20.7 7.2 20.6 12.6 C20.5 15 19.2 17 17.3 18.2 C18.3 14.6 17.4 10.8 13.1 7.9 V7 H10.6 V1 Z" fill="url(#ng)"/><rect x="10.6" y="1" width="2.5" height="20.5" fill="#86d4f8"/><ellipse cx="8" cy="21.2" rx="5.2" ry="4" transform="rotate(-22 8 21.2)" fill="#7dcff6"/></svg>
<span style="left:48.62px;top:532.46px;font-size:16px;color:#eef6ff;letter-spacing:-0.080px;">Radio Soft.</span>
<svg style="left:10px;top:557px" width="22" height="27" viewBox="0 0 22 27"><path d="M11 0.9 C13.6 5.4 20.7 7.2 20.6 12.6 C20.5 15 19.2 17 17.3 18.2 C18.3 14.6 17.4 10.8 13.1 7.9 V7 H10.6 V1 Z" fill="url(#ng)"/><rect x="10.6" y="1" width="2.5" height="20.5" fill="#86d4f8"/><ellipse cx="8" cy="21.2" rx="5.2" ry="4" transform="rotate(-22 8 21.2)" fill="#7dcff6"/></svg>
<span style="left:48.65px;top:563.46px;font-size:16px;color:#eef6ff;transform:scaleX(0.9778);transform-origin:0 0;">Radio100.</span>
<div style="left:0px;top:587.2px;width:222.3px;height:27.4px;background:#0d3460;"></div>
<svg style="left:10px;top:588px" width="22" height="27" viewBox="0 0 22 27"><path d="M11 0.9 C13.6 5.4 20.7 7.2 20.6 12.6 C20.5 15 19.2 17 17.3 18.2 C18.3 14.6 17.4 10.8 13.1 7.9 V7 H10.6 V1 Z" fill="url(#ng)"/><rect x="10.6" y="1" width="2.5" height="20.5" fill="#86d4f8"/><ellipse cx="8" cy="21.2" rx="5.2" ry="4" transform="rotate(-22 8 21.2)" fill="#7dcff6"/></svg>
<span style="left:49.43px;top:594.46px;font-size:16px;color:#d9f23c;transform:scaleX(0.9728);transform-origin:0 0;">skala.fm</span>
<svg style="left:10px;top:619px" width="22" height="27" viewBox="0 0 22 27"><path d="M11 0.9 C13.6 5.4 20.7 7.2 20.6 12.6 C20.5 15 19.2 17 17.3 18.2 C18.3 14.6 17.4 10.8 13.1 7.9 V7 H10.6 V1 Z" fill="url(#ng)"/><rect x="10.6" y="1" width="2.5" height="20.5" fill="#86d4f8"/><ellipse cx="8" cy="21.2" rx="5.2" ry="4" transform="rotate(-22 8 21.2)" fill="#7dcff6"/></svg>
<span style="left:49.59px;top:625.46px;font-size:16px;color:#eef6ff;transform:scaleX(0.9626);transform-origin:0 0;">The Voice.</span>
<svg style="left:10px;top:650px" width="22" height="27" viewBox="0 0 22 27"><path d="M11 0.9 C13.6 5.4 20.7 7.2 20.6 12.6 C20.5 15 19.2 17 17.3 18.2 C18.3 14.6 17.4 10.8 13.1 7.9 V7 H10.6 V1 Z" fill="url(#ng)"/><rect x="10.6" y="1" width="2.5" height="20.5" fill="#86d4f8"/><ellipse cx="8" cy="21.2" rx="5.2" ry="4" transform="rotate(-22 8 21.2)" fill="#7dcff6"/></svg>
<span style="left:49.83px;top:656.46px;font-size:16px;color:#eef6ff;transform:scaleX(0.8674);transform-origin:0 0;">VLR</span>
<div style="left:222.3px;top:267.5px;width:5.2px;height:421px;background:#eceff3;"></div>
<div style="left:227.5px;top:268px;width:201.1px;height:420px;background:#1d5b8f;"></div>
<div style="left:227.5px;top:268px;width:201.1px;height:32.6px;background:#112f52;"></div>
<span style="left:232.27px;top:274.94px;font-size:18.5px;color:#fff;letter-spacing:0.394px;">Service Quality</span>
<span style="left:237.42px;top:319.05px;font-size:14px;color:#fff;transform:scaleX(0.9130);transform-origin:0 0;">SNR (dB)</span>
<div style="left:357.3px;top:313px;width:60.2px;height:24.6px;background:#808080;"></div>
<div style="left:357.3px;top:313px;width:18px;height:24.6px;background:#ffa500;"></div>
<span style="left:375.35px;top:321.27px;font-size:11.5px;color:#fff;">10.2</span>
<span style="left:236.95px;top:350.05px;font-size:14px;color:#fff;transform:scaleX(0.9401);transform-origin:0 0;">FIC (ok %)</span>
<div style="left:357.3px;top:344px;width:60.2px;height:24.6px;background:#808080;"></div>
<div style="left:357.3px;top:344px;width:60.2px;height:24.6px;background:#008000;"></div>
<span style="left:376.94px;top:352.27px;font-size:11.5px;color:#fff;">100</span>
<span style="left:238.00px;top:381.05px;font-size:14px;color:#fff;letter-spacing:-0.067px;">Audio (ok %)</span>
<div style="left:357.3px;top:375px;width:60.2px;height:24.6px;background:#808080;"></div>
<div style="left:357.3px;top:375px;width:60.2px;height:24.6px;background:#008000;"></div>
<span style="left:376.94px;top:383.27px;font-size:11.5px;color:#fff;">100</span>
<span style="left:236.88px;top:412.05px;font-size:14px;color:#fff;letter-spacing:0.094px;">Null Symbol</span>
<div style="left:357.3px;top:406px;width:60.2px;height:24.6px;background:#808080;"></div>
<div style="left:357.3px;top:406px;width:60.2px;height:24.6px;background:#008000;"></div>
<span style="left:237.39px;top:443.05px;font-size:14px;color:#fff;transform:scaleX(0.9753);transform-origin:0 0;">SymbolTime (ms)</span>
<div style="left:357.3px;top:437px;width:60.2px;height:24.6px;background:#808080;"></div>
<div style="left:357.3px;top:437px;width:9px;height:24.6px;background:#008000;"></div>
<span style="left:375.75px;top:445.27px;font-size:11.5px;color:#fff;">0.22</span>
<span style="left:236.92px;top:474.05px;font-size:14px;color:#fff;transform:scaleX(0.9679);transform-origin:0 0;">FrameTime (ms)</span>
<div style="left:357.3px;top:468px;width:60.2px;height:24.6px;background:#808080;"></div>
<div style="left:357.3px;top:468px;width:39px;height:24.6px;background:#008000;"></div>
<span style="left:375.69px;top:476.27px;font-size:11.5px;color:#fff;">96.6</span>
<div style="left:428.6px;top:267.5px;width:3.1px;height:421px;background:#e4e9f0;"></div>
<div style="left:431.7px;top:268px;width:512px;height:420px;background:#0f3868;"></div>
<div style="left:431.7px;top:268px;width:512px;height:34.5px;background:linear-gradient(#0d2c53,#0f3868 60%);"></div>
<div style="left:437.6px;top:302px;width:502px;height:386px;background:#1d5b8f;"></div>
<div style="left:439.5px;top:275px;width:59.5px;height:27.5px;background:#858585;border-radius:4px 10px 0 0;"></div>
<div style="left:499px;top:275px;width:44.60000000000002px;height:27.5px;background:#858585;border-radius:4px 10px 0 0;"></div>
<div style="left:543.6px;top:275px;width:71.10000000000002px;height:27.5px;background:#858585;border-radius:4px 10px 0 0;"></div>
<div style="left:692px;top:275px;width:59px;height:27.5px;background:#858585;border-radius:4px 10px 0 0;"></div>
<div style="left:751px;top:275px;width:85px;height:27.5px;background:#858585;border-radius:4px 10px 0 0;"></div>
<div style="left:836px;top:275px;width:98.70000000000005px;height:27.5px;background:#858585;border-radius:4px 10px 0 0;"></div>
<div style="left:615px;top:275px;width:77.2px;height:28px;background:#1d5b8f;border-radius:4px 10px 0 0;box-sizing:border-box;border:1px solid #2d76b2;border-bottom:none;"></div>
<span style="left:452.10px;top:282.63px;font-size:16.5px;color:#dedede;transform:scaleX(0.9449);transform-origin:0 0;">Sync</span>
<span style="left:513.10px;top:282.63px;font-size:16.5px;color:#dedede;transform:scaleX(0.9077);transform-origin:0 0;">TII</span>
<span style="left:557.40px;top:282.63px;font-size:16.5px;color:#dedede;letter-spacing:0.501px;">Audio</span>
<span style="left:706.60px;top:282.63px;font-size:16.5px;color:#dedede;transform:scaleX(0.9361);transform-origin:0 0;">AAC</span>
<span style="left:763.76px;top:282.63px;font-size:16.5px;color:#dedede;letter-spacing:0.513px;">Options</span>
<span style="left:848.88px;top:282.63px;font-size:16.5px;color:#dedede;letter-spacing:0.003px;">Ensemble</span>
<span style="left:626.87px;top:282.63px;font-size:16.5px;color:#eef7ff;transform:scaleX(0.9787);transform-origin:0 0;">Service</span>
<div style="left:446.4px;top:311.3px;width:483.6px;height:24.4px;background:#000;border-radius:3px;"></div>
<span style="left:646.96px;top:315.61px;font-size:17px;color:#f5a31f;">Pop Music</span>
<div style="left:446.4px;top:345.5px;width:483.6px;height:150.3px;background:#000;border-radius:2px;"></div>
<span style="left:452.70px;top:352.80px;font-size:15px;color:#fff;letter-spacing:0.379px;">Tiësto/Teddy Swims - Lose Control</span>
<div style="left:943.7px;top:267.5px;width:5px;height:421px;background:#eceff3;"></div>
<div style="left:948.7px;top:268px;width:875px;height:19.8px;background:#112f52;"></div>
<span style="left:1325.30px;top:270.45px;font-size:14px;color:#fff;letter-spacing:0.181px;">Channel Impulse Response (CIR)</span>
<div style="left:958.4px;top:299.4px;width:13.2px;height:13.2px;border-radius:50%;background:radial-gradient(circle at 50% 40%,#f0f0f0,#d4d4d4);"></div>
<span style="left:975.11px;top:300.44px;font-size:12px;color:#fff;transform:scaleX(0.9269);transform-origin:0 0;">Freeze</span>
<div style="left:1029.7px;top:299.4px;width:13.2px;height:13.2px;border-radius:50%;background:radial-gradient(circle at 50% 40%,#f0f0f0,#d4d4d4);"></div>
<span style="left:1046.20px;top:300.44px;font-size:12px;color:#fff;letter-spacing:-0.023px;">Gradient</span>
<span style="left:963.06px;top:348.14px;font-size:12px;color:#fff;letter-spacing:-0.016px;">Smoothing Level</span>
<svg style="left:0;top:0" width="1823" height="688"><line x1="965.00" y1="365.0" x2="965.00" y2="369.3" stroke="#bdbdbd" stroke-width="0.9"/><line x1="969.40" y1="366.2" x2="969.40" y2="369.3" stroke="#bdbdbd" stroke-width="0.9"/><line x1="973.80" y1="366.2" x2="973.80" y2="369.3" stroke="#bdbdbd" stroke-width="0.9"/><line x1="978.20" y1="366.2" x2="978.20" y2="369.3" stroke="#bdbdbd" stroke-width="0.9"/><line x1="982.60" y1="366.2" x2="982.60" y2="369.3" stroke="#bdbdbd" stroke-width="0.9"/><line x1="987.00" y1="366.2" x2="987.00" y2="369.3" stroke="#bdbdbd" stroke-width="0.9"/><line x1="991.40" y1="366.2" x2="991.40" y2="369.3" stroke="#bdbdbd" stroke-width="0.9"/><line x1="995.80" y1="366.2" x2="995.80" y2="369.3" stroke="#bdbdbd" stroke-width="0.9"/><line x1="1000.20" y1="366.2" x2="1000.20" y2="369.3" stroke="#bdbdbd" stroke-width="0.9"/><line x1="1004.60" y1="366.2" x2="1004.60" y2="369.3" stroke="#bdbdbd" stroke-width="0.9"/><line x1="1009.00" y1="366.2" x2="1009.00" y2="369.3" stroke="#bdbdbd" stroke-width="0.9"/><line x1="1013.40" y1="366.2" x2="1013.40" y2="369.3" stroke="#bdbdbd" stroke-width="0.9"/><line x1="1017.80" y1="366.2" x2="1017.80" y2="369.3" stroke="#bdbdbd" stroke-width="0.9"/><line x1="1022.20" y1="366.2" x2="1022.20" y2="369.3" stroke="#bdbdbd" stroke-width="0.9"/><line x1="1026.60" y1="366.2" x2="1026.60" y2="369.3" stroke="#bdbdbd" stroke-width="0.9"/><line x1="1031.00" y1="366.2" x2="1031.00" y2="369.3" stroke="#bdbdbd" stroke-width="0.9"/><line x1="1035.40" y1="366.2" x2="1035.40" y2="369.3" stroke="#bdbdbd" stroke-width="0.9"/><line x1="1039.80" y1="366.2" x2="1039.80" y2="369.3" stroke="#bdbdbd" stroke-width="0.9"/><line x1="1044.20" y1="366.2" x2="1044.20" y2="369.3" stroke="#bdbdbd" stroke-width="0.9"/><line x1="1048.60" y1="366.2" x2="1048.60" y2="369.3" stroke="#bdbdbd" stroke-width="0.9"/><line x1="1053.00" y1="366.2" x2="1053.00" y2="369.3" stroke="#bdbdbd" stroke-width="0.9"/><line x1="1057.40" y1="366.2" x2="1057.40" y2="369.3" stroke="#bdbdbd" stroke-width="0.9"/><line x1="1061.80" y1="366.2" x2="1061.80" y2="369.3" stroke="#bdbdbd" stroke-width="0.9"/><line x1="1066.20" y1="366.2" x2="1066.20" y2="369.3" stroke="#bdbdbd" stroke-width="0.9"/><line x1="1070.60" y1="366.2" x2="1070.60" y2="369.3" stroke="#bdbdbd" stroke-width="0.9"/><line x1="1075.00" y1="366.2" x2="1075.00" y2="369.3" stroke="#bdbdbd" stroke-width="0.9"/><line x1="1079.40" y1="366.2" x2="1079.40" y2="369.3" stroke="#bdbdbd" stroke-width="0.9"/><line x1="1083.80" y1="366.2" x2="1083.80" y2="369.3" stroke="#bdbdbd" stroke-width="0.9"/><line x1="1088.20" y1="366.2" x2="1088.20" y2="369.3" stroke="#bdbdbd" stroke-width="0.9"/><line x1="1092.60" y1="366.2" x2="1092.60" y2="369.3" stroke="#bdbdbd" stroke-width="0.9"/><line x1="1097.00" y1="365.0" x2="1097.00" y2="369.3" stroke="#bdbdbd" stroke-width="0.9"/></svg>
<div style="left:959px;top:375.2px;width:144px;height:2.4px;background:#d8d8d8;border-radius:1.2px;"></div>
<div style="left:976.9px;top:370.2px;width:12.4px;height:12.4px;border-radius:50%;background:radial-gradient(circle at 50% 25%,#d8d8d8 0%,#b0b0b0 45%,#707070 100%);box-shadow:0 0 0 1.5px rgba(48,48,48,.9);"></div>
<span style="left:963.24px;top:402.14px;font-size:12px;color:#fff;">Zoom X</span>
<div style="left:959px;top:425.8px;width:144px;height:2.4px;background:#d8d8d8;border-radius:1.2px;"></div>
<div style="left:959.3px;top:420.8px;width:12.4px;height:12.4px;border-radius:50%;background:radial-gradient(circle at 50% 25%,#d8d8d8 0%,#b0b0b0 45%,#707070 100%);box-shadow:0 0 0 1.5px rgba(48,48,48,.9);"></div>
<span style="left:963.68px;top:451.64px;font-size:12px;color:#fff;transform:scaleX(0.9657);transform-origin:0 0;">x-Axis</span>
<div style="left:969.8px;top:471.5px;width:11.2px;height:11.2px;border-radius:50%;background:radial-gradient(circle at 50% 40%,#f0f0f0,#d4d4d4);"></div>
<span style="left:987.29px;top:471.74px;font-size:12px;color:#fff;transform:scaleX(0.9536);transform-origin:0 0;">Samples</span>
<svg style="left:969.8px;top:491.4px;" width="11.2" height="11.2" viewBox="0 0 14 14"><circle cx="7" cy="7" r="7" fill="#f0f0f0"/><circle cx="7" cy="7" r="3.3" fill="#111"/></svg>
<span style="left:986.84px;top:491.64px;font-size:12px;color:#fff;letter-spacing:-0.083px;">Distance</span>
<div style="left:969.8px;top:511.4px;width:11.2px;height:11.2px;border-radius:50%;background:radial-gradient(circle at 50% 40%,#f0f0f0,#d4d4d4);"></div>
<span style="left:987.56px;top:511.24px;font-size:12px;color:#fff;letter-spacing:-0.013px;">Time</span>
<svg style="left:0;top:0" width="1823" height="688" viewBox="0 0 1823 688"><path d="M1184.3 298.6H1823M1184.3 319.3H1823M1184.3 340.0H1823M1184.3 360.7H1823M1184.3 381.4H1823M1184.3 402.1H1823M1184.3 422.8H1823M1184.3 443.5H1823M1184.3 464.2H1823M1184.3 484.9H1823M1184.3 505.6H1823M1184.3 547.0H1823M1184.3 548.4H1823M1217.3 298.6V552.9M1265.9 298.6V552.9M1314.5 298.6V552.9M1363.1 298.6V552.9M1411.7 298.6V552.9M1460.3 298.6V552.9M1508.9 298.6V552.9M1557.5 298.6V552.9M1606.1 298.6V552.9M1654.7 298.6V552.9M1703.3 298.6V552.9M1751.9 298.6V552.9M1800.5 298.6V552.9M1184.3 298.6V548.4" stroke="#c4c4c4" stroke-width="1" fill="none" shape-rendering="crispEdges"/><path d="M1182.3 298.6H1184.3M1182.3 340.0H1184.3M1182.3 381.4H1184.3M1182.3 422.8H1184.3M1182.3 464.2H1184.3M1182.3 505.6H1184.3" stroke="#c4c4c4" stroke-width="1" fill="none" shape-rendering="crispEdges"/><path d="M1184.8 448.2 L1186.8 454.5 L1188.7 447.8 L1190.7 452.7 L1192.6 443.7 L1194.6 452.4 L1196.5 454.6 L1198.5 463.7 L1200.4 455.9 L1202.4 449.9 L1204.3 451.7 L1206.3 452.8 L1208.2 457.3 L1210.2 453.8 L1212.1 447.5 L1214.1 452.3 L1216.0 450.0 L1218.0 453.8 L1219.9 456.3 L1221.9 447.8 L1223.8 452.6 L1225.8 454.4 L1227.7 455.2 L1229.7 449.8 L1231.6 455.7 L1233.6 453.0 L1235.5 456.5 L1237.5 448.3 L1239.4 443.6 L1241.4 461.7 L1243.3 456.9 L1245.3 459.5 L1247.2 455.6 L1249.2 450.6 L1251.1 453.8 L1253.1 451.8 L1255.0 451.5 L1257.0 451.7 L1258.9 463.3 L1260.9 455.0 L1262.8 451.2 L1264.8 451.9 L1266.7 451.6 L1268.7 452.7 L1270.6 459.7 L1272.6 454.5 L1274.5 453.8 L1276.5 450.0 L1278.4 450.8 L1280.4 447.9 L1282.3 453.5 L1284.3 457.8 L1286.2 460.0 L1288.2 455.4 L1290.1 458.9 L1292.1 460.7 L1294.0 450.5 L1296.0 453.9 L1297.9 453.7 L1299.9 452.2 L1301.8 450.1 L1303.8 452.3 L1305.7 455.9 L1307.7 457.7 L1309.6 450.1 L1311.6 450.1 L1313.5 454.9 L1315.5 453.2 L1317.4 454.3 L1319.4 453.0 L1321.3 452.7 L1323.3 446.1 L1325.2 443.7 L1327.2 448.7 L1329.1 447.3 L1331.1 447.0 L1333.0 445.1 L1335.0 443.7 L1336.9 434.0 L1338.9 439.7 L1340.8 439.5 L1342.8 432.3 L1344.7 433.0 L1346.7 439.2 L1348.6 426.2 L1350.6 433.0 L1352.5 424.0 L1354.5 420.4 L1356.4 423.0 L1358.4 409.5 L1360.3 386.1 L1362.1 352.0 L1363.1 300.0 L1364.1 360.0 L1366.2 392.7 L1368.1 411.1 L1370.1 420.5 L1372.0 431.1 L1374.0 430.5 L1375.9 430.5 L1377.9 440.5 L1379.8 441.7 L1381.8 435.5 L1383.7 437.5 L1385.7 446.5 L1387.6 445.4 L1389.6 435.2 L1391.5 441.2 L1393.5 443.1 L1395.4 449.3 L1397.4 439.4 L1399.3 445.9 L1401.3 449.1 L1403.2 448.0 L1405.2 451.4 L1407.1 444.8 L1409.1 454.9 L1411.0 449.2 L1413.0 447.8 L1414.9 443.9 L1416.9 449.2 L1418.8 448.5 L1420.8 456.6 L1422.7 450.7 L1424.7 455.0 L1426.6 451.5 L1428.6 446.0 L1430.5 444.3 L1432.5 451.7 L1434.4 449.2 L1436.4 451.6 L1438.3 450.1 L1440.3 454.3 L1442.2 445.9 L1444.2 446.6 L1446.1 452.4 L1448.1 450.2 L1450.0 454.1 L1452.0 454.4 L1453.9 447.7 L1455.9 454.9 L1457.8 455.5 L1459.8 450.0 L1461.7 450.3 L1463.7 444.5 L1465.6 453.6 L1467.6 459.8 L1469.5 445.0 L1471.5 450.2 L1473.4 451.5 L1475.4 447.3 L1477.3 453.7 L1479.3 460.0 L1481.2 452.7 L1483.2 449.7 L1485.1 453.4 L1487.1 453.7 L1489.0 455.3 L1491.0 447.0 L1492.9 453.7 L1494.9 451.6 L1496.8 450.6 L1498.8 458.3 L1500.7 455.0 L1502.7 448.0 L1504.6 456.9 L1506.6 445.3 L1508.5 456.9 L1510.5 451.3 L1512.4 447.8 L1514.4 455.4 L1516.3 451.4 L1518.3 453.9 L1520.2 447.6 L1522.2 456.8 L1524.1 454.3 L1526.1 455.1 L1528.0 450.9 L1530.0 445.8 L1531.9 455.3 L1533.9 451.3 L1535.8 454.7 L1537.8 461.5 L1539.7 453.4 L1541.7 455.0 L1543.6 452.9 L1545.6 452.2 L1547.5 450.4 L1549.5 454.0 L1551.4 457.0 L1553.4 448.3 L1555.3 454.9 L1557.3 448.7 L1559.2 448.4 L1561.2 446.6 L1563.1 447.5 L1565.1 455.6 L1567.0 444.6 L1569.0 454.9 L1570.9 451.2 L1572.9 454.4 L1574.8 454.6 L1576.8 458.5 L1578.7 456.7 L1580.7 455.3 L1582.6 456.9 L1584.6 458.1 L1586.5 454.4 L1588.5 452.1 L1590.4 446.5 L1592.4 453.1 L1594.3 453.1 L1596.3 447.4 L1598.2 452.0 L1600.2 454.6 L1602.1 459.6 L1604.1 453.6 L1606.0 453.3 L1608.0 452.8 L1609.9 449.0 L1611.9 449.7 L1613.8 450.2 L1615.8 445.3 L1617.7 452.2 L1619.7 448.5 L1621.6 451.8 L1623.6 452.4 L1625.5 450.3 L1627.5 445.1 L1629.4 448.7 L1631.4 449.8 L1633.3 452.0 L1635.3 461.1 L1637.2 454.1 L1639.2 448.8 L1641.1 450.2 L1643.1 446.2 L1645.0 452.2 L1647.0 451.0 L1648.9 456.1 L1650.9 452.7 L1652.8 453.5 L1654.8 461.8 L1656.7 449.8 L1658.7 448.2 L1660.6 458.1 L1662.6 452.5 L1664.5 453.3 L1666.5 452.4 L1668.4 455.9 L1670.4 457.0 L1672.3 452.5 L1674.3 461.0 L1676.2 457.4 L1678.2 451.5 L1680.1 453.1 L1682.1 451.1 L1684.0 461.1 L1686.0 455.0 L1687.9 454.7 L1689.9 459.9 L1691.8 451.1 L1693.8 449.5 L1695.7 450.4 L1697.7 449.5 L1699.6 451.3 L1701.6 455.6 L1703.5 456.1 L1705.5 457.9 L1707.4 452.5 L1709.4 451.2 L1711.3 460.1 L1713.3 456.3 L1715.2 455.4 L1717.2 452.0 L1719.1 451.8 L1721.1 448.2 L1723.0 451.0 L1725.0 451.3 L1726.9 452.9 L1728.9 453.7 L1730.8 447.1 L1732.8 454.5 L1734.7 449.0 L1736.7 450.5 L1738.6 462.1 L1740.6 452.4 L1742.5 458.7 L1744.5 457.9 L1746.4 450.5 L1748.4 454.9 L1750.3 447.9 L1752.3 449.5 L1754.2 452.6 L1756.2 463.4 L1758.1 453.8 L1760.1 452.8 L1762.0 451.2 L1764.0 455.7 L1765.9 455.5 L1767.9 449.9 L1769.8 449.7 L1771.8 448.9 L1773.7 462.5 L1775.7 457.4 L1777.6 452.8 L1779.6 449.8 L1781.5 453.9 L1783.5 449.0 L1785.4 450.3 L1787.4 456.9 L1789.3 450.6 L1791.3 452.6 L1793.2 448.4 L1795.2 450.7 L1797.1 452.7 L1799.1 451.0 L1801.0 455.4 L1803.0 454.1 L1804.9 452.1 L1806.9 454.6 L1808.8 451.2 L1810.8 454.0 L1812.7 460.6 L1814.7 448.0 L1816.6 453.6 L1818.6 449.4 L1820.5 460.1 L1822.5 449.2 L1824.4 450.0" stroke="#e6e619" stroke-width="1.5" fill="none" stroke-linejoin="round"/><rect x="1183.0" y="298.1" width="180.6" height="250.8" fill="rgb(116,116,116)" fill-opacity="0.58" shape-rendering="crispEdges"/><text x="1173.5" y="305.2" font-size="20.5" fill="#f2f2f2" stroke="#f2f2f2" stroke-width="0.35" text-anchor="end" textLength="40.5" lengthAdjust="spacingAndGlyphs">70.0</text><text x="1173.5" y="346.6" font-size="20.5" fill="#f2f2f2" stroke="#f2f2f2" stroke-width="0.35" text-anchor="end" textLength="40.5" lengthAdjust="spacingAndGlyphs">60.0</text><text x="1173.5" y="388.0" font-size="20.5" fill="#f2f2f2" stroke="#f2f2f2" stroke-width="0.35" text-anchor="end" textLength="40.5" lengthAdjust="spacingAndGlyphs">50.0</text><text x="1173.5" y="429.4" font-size="20.5" fill="#f2f2f2" stroke="#f2f2f2" stroke-width="0.35" text-anchor="end" textLength="40.5" lengthAdjust="spacingAndGlyphs">40.0</text><text x="1173.5" y="470.8" font-size="20.5" fill="#f2f2f2" stroke="#f2f2f2" stroke-width="0.35" text-anchor="end" textLength="40.5" lengthAdjust="spacingAndGlyphs">30.0</text><text x="1173.5" y="512.2" font-size="20.5" fill="#f2f2f2" stroke="#f2f2f2" stroke-width="0.35" text-anchor="end" textLength="40.5" lengthAdjust="spacingAndGlyphs">20.0</text><text x="1214.8" y="573.9" font-size="20.5" fill="#f2f2f2" stroke="#f2f2f2" stroke-width="0.35" text-anchor="middle" textLength="30.0" lengthAdjust="spacingAndGlyphs">-60</text><text x="1263.4" y="573.9" font-size="20.5" fill="#f2f2f2" stroke="#f2f2f2" stroke-width="0.35" text-anchor="middle" textLength="30.0" lengthAdjust="spacingAndGlyphs">-40</text><text x="1312.0" y="573.9" font-size="20.5" fill="#f2f2f2" stroke="#f2f2f2" stroke-width="0.35" text-anchor="middle" textLength="30.0" lengthAdjust="spacingAndGlyphs">-20</text><text x="1363.1" y="573.9" font-size="20.5" fill="#f2f2f2" stroke="#f2f2f2" stroke-width="0.35" text-anchor="middle" textLength="11.0" lengthAdjust="spacingAndGlyphs">0</text><text x="1411.7" y="573.9" font-size="20.5" fill="#f2f2f2" stroke="#f2f2f2" stroke-width="0.35" text-anchor="middle" textLength="22.5" lengthAdjust="spacingAndGlyphs">20</text><text x="1460.3" y="573.9" font-size="20.5" fill="#f2f2f2" stroke="#f2f2f2" stroke-width="0.35" text-anchor="middle" textLength="22.5" lengthAdjust="spacingAndGlyphs">40</text><text x="1508.9" y="573.9" font-size="20.5" fill="#f2f2f2" stroke="#f2f2f2" stroke-width="0.35" text-anchor="middle" textLength="22.5" lengthAdjust="spacingAndGlyphs">60</text><text x="1557.5" y="573.9" font-size="20.5" fill="#f2f2f2" stroke="#f2f2f2" stroke-width="0.35" text-anchor="middle" textLength="22.5" lengthAdjust="spacingAndGlyphs">80</text><text x="1606.1" y="573.9" font-size="20.5" fill="#f2f2f2" stroke="#f2f2f2" stroke-width="0.35" text-anchor="middle" textLength="33.5" lengthAdjust="spacingAndGlyphs">100</text><text x="1654.7" y="573.9" font-size="20.5" fill="#f2f2f2" stroke="#f2f2f2" stroke-width="0.35" text-anchor="middle" textLength="33.5" lengthAdjust="spacingAndGlyphs">120</text><text x="1703.3" y="573.9" font-size="20.5" fill="#f2f2f2" stroke="#f2f2f2" stroke-width="0.35" text-anchor="middle" textLength="33.5" lengthAdjust="spacingAndGlyphs">140</text><text x="1751.9" y="573.9" font-size="20.5" fill="#f2f2f2" stroke="#f2f2f2" stroke-width="0.35" text-anchor="middle" textLength="33.5" lengthAdjust="spacingAndGlyphs">160</text><text x="1800.5" y="573.9" font-size="20.5" fill="#f2f2f2" stroke="#f2f2f2" stroke-width="0.35" text-anchor="middle" textLength="33.5" lengthAdjust="spacingAndGlyphs">180</text><text x="1543.5" y="593.6" font-size="20.5" fill="#f2f2f2" stroke="#f2f2f2" stroke-width="0.35" text-anchor="middle" textLength="232.0" lengthAdjust="spacingAndGlyphs">Distance Difference (km)</text><text x="0.0" y="0.0" font-size="21" fill="#f2f2f2" stroke="#f2f2f2" stroke-width="0.35" text-anchor="middle" textLength="146.0" lengthAdjust="spacingAndGlyphs" transform="translate(1139.3,422) rotate(-90)">Magnitude (dB)</text><path d="M1362.2 302.5 L1366.6 306 L1362.2 309.5 Z" fill="#7fe0a0"/><text x="1343.2" y="311.6" font-size="21.3" fill="#f2f2f2" stroke="#f2f2f2" stroke-width="0.35" text-anchor="start" textLength="41.0" lengthAdjust="spacingAndGlyphs">35 1</text></svg>
<div style="left:948px;top:598px;width:875px;height:5px;background:#8a8a8a;"></div>
<div style="left:948px;top:603px;width:875px;height:20px;background:#112f52;"></div>
<span style="left:1379.00px;top:605.35px;font-size:14px;color:#fff;letter-spacing:0.600px;">Audio Spectrum</span>
<div style="left:954px;top:633.4px;width:167px;height:51px;background:#303030;border-radius:4px;"></div>
<span style="left:961.92px;top:627.87px;font-size:13.5px;color:#fff;letter-spacing:-0.114px;">Flags</span>
<div style="left:969.2px;top:654.4px;width:13.2px;height:13.2px;border-radius:50%;background:radial-gradient(circle at 50% 40%,#f0f0f0,#d4d4d4);"></div>
<span style="left:985.90px;top:655.84px;font-size:12px;color:#fff;transform:scaleX(0.9408);transform-origin:0 0;">Freeze</span>
<div style="left:1047.7px;top:654.4px;width:13.2px;height:13.2px;border-radius:50%;background:radial-gradient(circle at 50% 40%,#f0f0f0,#d4d4d4);"></div>
<span style="left:1064.20px;top:655.84px;font-size:12px;color:#fff;letter-spacing:-0.023px;">Gradient</span>
<div style="left:1132.8px;top:624.5px;width:4.5px;height:70px;background:#bdbdbd;border-radius:2.2px;"></div>
<svg style="left:0;top:0" width="1823" height="688" viewBox="0 0 1823 688"><path d="M1214.5 633.3H1823M1214.5 648.6H1823M1214.5 663.9H1823M1214.5 679.2H1823M1214.5 694.5H1823M1214.5 633.3V688M1272.7 633.3V688M1330.9 633.3V688M1389.1 633.3V688M1447.3 633.3V688M1505.5 633.3V688M1563.7 633.3V688M1621.9 633.3V688M1680.1 633.3V688M1738.3 633.3V688M1796.5 633.3V688M1854.7 633.3V688" stroke="#c4c4c4" stroke-width="1" fill="none" shape-rendering="crispEdges"/><path d="M1212.5 633.3H1214.5M1212.5 679.1999999999999H1214.5" stroke="#c4c4c4" stroke-width="1" fill="none" shape-rendering="crispEdges"/><path d="M1216 693 L1218.5 685 L1221 691 L1224 693 L1228 691 L1231 687.5 L1234 684 L1237 691 L1240 687 L1243 690 L1246 693" stroke="#e6e619" stroke-width="1.3" fill="none"/><text x="1203.5" y="640.1" font-size="20.5" fill="#f2f2f2" stroke="#f2f2f2" stroke-width="0.35" text-anchor="end" textLength="36.0" lengthAdjust="spacingAndGlyphs">-5.0</text><text x="1203.5" y="686.0" font-size="20.5" fill="#f2f2f2" stroke="#f2f2f2" stroke-width="0.35" text-anchor="end" textLength="48.4" lengthAdjust="spacingAndGlyphs">-20.0</text><text x="0.0" y="0.0" font-size="21" fill="#f2f2f2" stroke="#f2f2f2" stroke-width="0.35" text-anchor="middle" textLength="146.0" lengthAdjust="spacingAndGlyphs" transform="translate(1169.5,737) rotate(-90)">Magnitude (dB)</text></svg>
</div></body></html>
